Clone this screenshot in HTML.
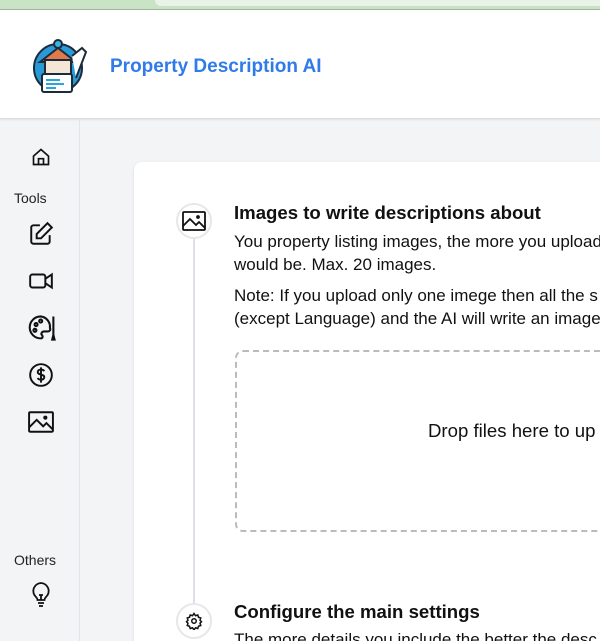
<!DOCTYPE html>
<html><head><style>
*{margin:0;padding:0;box-sizing:border-box}
html,body{width:600px;height:641px;overflow:hidden}
body{background:#f3f4f6;font-family:"Liberation Sans",sans-serif;position:relative;color:#111}
.top{position:absolute;left:0;top:0;width:600px;height:10px;background:#c9e3c5}
.tab{position:absolute;left:155px;top:0;width:445px;height:6px;background:#eaf3e8;border-radius:0 0 0 8px}
.hdr{position:absolute;left:0;top:9px;width:600px;height:110px;background:#fff;border-top:1px solid #9fb59c;border-bottom:1px solid #dcdcdc;box-shadow:0 1px 2px rgba(0,0,0,.08)}
.title{position:absolute;left:110px;top:46px;font-size:19px;font-weight:bold;color:#2f7be9}
.side{position:absolute;left:0;top:120px;width:80px;height:521px;border-right:1px solid #e2e4e8}
.lbl{position:absolute;font-size:14px;color:#222}
.ic{position:absolute;left:28px}
.card{position:absolute;left:134px;top:162px;width:480px;height:500px;background:#fff;border-radius:8px;box-shadow:0 1px 3px rgba(0,0,0,.1)}
.line{position:absolute;left:193px;top:236px;width:2px;height:370px;background:#dde0e4}
.circ{position:absolute;width:36px;height:36px;border-radius:50%;border:2px solid #e5e7eb;background:#fff;display:flex;align-items:center;justify-content:center}
.h{position:absolute;left:234px;font-size:18.6px;font-weight:bold}
.p{position:absolute;left:234px;font-size:17px;line-height:23px;white-space:nowrap}
.drop{position:absolute;left:235px;top:350px;width:400px;height:182px;border:2px dashed #bbb;border-radius:8px}
</style></head><body>
<div class="top"></div><div class="tab"></div>
<div class="hdr">
<svg style="position:absolute;left:32px;top:28px" width="58" height="58" viewBox="0 0 58 58">
<circle cx="26" cy="30" r="24" fill="#2a9ad6" stroke="#1d2a3a" stroke-width="2"/>
<path d="M8 24 L26 10 L44 24 Z" fill="#e07a4a" stroke="#1d2a3a" stroke-width="2"/>
<rect x="13" y="22" width="26" height="16" fill="#f4e6d6" stroke="#1d2a3a" stroke-width="2"/>
<circle cx="26" cy="6" r="4" fill="#35b5e5" stroke="#1d2a3a" stroke-width="2"/>
<rect x="10" y="36" width="30" height="18" rx="2" fill="#fff" stroke="#1d2a3a" stroke-width="2"/>
<path d="M14 42h14M14 46h18M14 50h10" stroke="#2aa3e0" stroke-width="2"/>
<path d="M40 18 L50 10 L54 14 L44 40" fill="#fff" stroke="#1d2a3a" stroke-width="2"/>
</svg>
<div class="title">Property Description AI</div>
</div>
<div class="side">
<svg class="ic" style="top:27px;left:31px" width="20" height="20" viewBox="0 0 24 24" fill="none" stroke="#111" stroke-width="2"><path d="M3 11 12 3l9 8v10H3z"/><path d="M9 21v-7h6v7"/></svg>
<div class="lbl" style="left:14px;top:70px">Tools</div>
<svg class="ic" style="top:101px" width="26" height="26" viewBox="0 0 24 24" fill="none" stroke="#111" stroke-width="1.8"><path d="M11 4H5a2 2 0 0 0-2 2v13a2 2 0 0 0 2 2h13a2 2 0 0 0 2-2v-6"/><path d="M18 2l4 4-10 10H8v-4z"/></svg>
<svg class="ic" style="top:148px" width="26" height="26" viewBox="0 0 24 24" fill="none" stroke="#111" stroke-width="1.8"><rect x="2" y="6" width="14" height="12" rx="2"/><path d="M16 10l6-4v12l-6-4"/></svg>
<svg class="ic" style="top:193px" width="30" height="30" viewBox="0 0 26 26" fill="none" stroke="#111" stroke-width="1.8"><path d="M11 3a9 9 0 1 0 0 19c2 0 2-2 1-3s0-3 2-3h3a2 2 0 0 0 2-3 9 9 0 0 0-8-10z"/><circle cx="7" cy="10" r="1.3"/><circle cx="11" cy="7" r="1.3"/><circle cx="6" cy="15" r="1.3"/><path d="M22 3v16M22 19l-1 4h2z"/></svg>
<svg class="ic" style="top:242px" width="26" height="26" viewBox="0 0 24 24" fill="none" stroke="#111" stroke-width="1.8"><circle cx="12" cy="12" r="10"/><path d="M15 8.5c-.5-1-1.5-1.5-3-1.5-2 0-3 1-3 2.3 0 3 6 1.5 6 4.7 0 1.3-1 2.3-3 2.3-1.5 0-2.6-.6-3-1.6M12 5v14"/></svg>
<svg class="ic" style="top:290px" width="26" height="24" viewBox="0 0 24 22" fill="none" stroke="#111" stroke-width="1.8"><rect x="1" y="2" width="22" height="18" rx="1"/><path d="M1 16l7-7 6 6 3-3 6 6"/><circle cx="16" cy="7" r="1"/></svg>
<div class="lbl" style="left:14px;top:432px">Others</div>
<svg class="ic" style="top:461px;left:29px" width="24" height="28" viewBox="0 0 24 28" fill="none" stroke="#111" stroke-width="1.8"><path d="M12 2a8 8 0 0 0-5 14c1 1 1.5 2 1.5 3h7c0-1 .5-2 1.5-3a8 8 0 0 0-5-14z"/><path d="M9 22h6M10 25h4M12 19v-5M10 14h4"/></svg>
</div>
<div class="card"></div>
<div class="line"></div>
<div class="circ" style="left:176px;top:203px"><svg width="26" height="22" viewBox="0 0 24 22" fill="none" stroke="#111" stroke-width="1.8"><rect x="1" y="2" width="22" height="18" rx="1"/><path d="M1 16l7-7 6 6 3-3 6 6"/><circle cx="16" cy="7" r="1"/></svg></div>
<div class="h" style="top:202px">Images to write descriptions about</div>
<div class="p" style="top:230px">You property listing images, the more you upload</div>
<div class="p" style="top:253px">would be. Max. 20 images.</div>
<div class="p" style="top:284px">Note: If you upload only one imege then all the s</div>
<div class="p" style="top:307px">(except Language) and the AI will write an image</div>
<div class="drop"></div>
<div class="p" style="left:428px;top:419px;font-size:18.6px">Drop files here to up</div>
<div class="circ" style="left:176px;top:603px"><svg width="18" height="18" viewBox="0 0 24 24" fill="none" stroke="#111" stroke-width="2"><circle cx="12" cy="12" r="3"/><path d="M12 2l2 3 3-1 1 3 3 1-1 3 2 2-2 2 1 3-3 1-1 3-3-1-2 3-2-3-3 1-1-3-3-1 1-3-2-2 2-2-1-3 3-1 1-3 3 1z"/></svg></div>
<div class="h" style="top:601px">Configure the main settings</div>
<div class="p" style="top:628px">The more details you include the better the desc</div>
</body></html>
